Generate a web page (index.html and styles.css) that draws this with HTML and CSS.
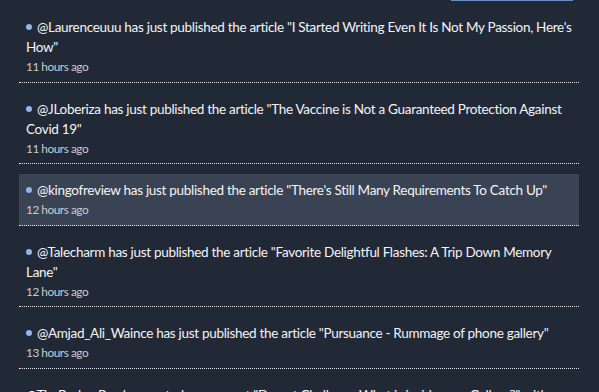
FILE: index.html
```html
<!DOCTYPE html>
<html>
<head>
    <title>Notifications</title>
    <link rel="stylesheet" href="styles.css">
</head>
<body>
    <div class="top-strip"><span class="tab-line"></span></div>
    <ul class="feed">
        <li class="feed-item">
            <p class="feed-text"><span class="dot"></span>@Laurenceuuu has just published the article "I Started Writing Even It Is Not My Passion, Here's How"</p>
            <p class="feed-time">11 hours ago</p>
        </li>
        <li class="feed-item">
            <p class="feed-text"><span class="dot"></span>@JLoberiza has just published the article "The Vaccine is Not a Guaranteed Protection Against Covid 19"</p>
            <p class="feed-time">11 hours ago</p>
        </li>
        <li class="feed-item active">
            <p class="feed-text"><span class="dot"></span>@kingofreview has just published the article "There's Still Many Requirements To Catch Up"</p>
            <p class="feed-time">12 hours ago</p>
        </li>
        <li class="feed-item">
            <p class="feed-text"><span class="dot"></span>@Talecharm has just published the article "Favorite Delightful Flashes: A Trip Down Memory Lane"</p>
            <p class="feed-time">12 hours ago</p>
        </li>
        <li class="feed-item">
            <p class="feed-text"><span class="dot"></span>@Amjad_Ali_Waince has just published the article "Pursuance - Rummage of phone gallery"</p>
            <p class="feed-time">13 hours ago</p>
        </li>
        <li class="feed-item">
            <p class="feed-text">@TheBrokenPen has posted a comment "Do not Challenge What is inside your Gallery?" with</p>
            <p class="feed-time">13 hours ago</p>
        </li>
    </ul>
</body>
</html>
```

FILE: styles.css
```css
html, body {
    margin: 0;
    height: 100%;
    overflow: hidden;
}
body {
    background-color: #212936;
    font-family: Lato, "Open Sans", sans-serif;
    color: #f3f4f6;
}
.top-strip {
    display: flex;
    height: 1px;
    padding-right: 26px;
}
.tab-line {
    margin-left: auto;
    width: 122px;
    background-color: #6c8fc6;
}
.feed {
    list-style: none;
    margin: 0;
    padding: 0 20px 0 19px;
}
.feed-item {
    margin-top: 10px;
    padding: 6px 6px 6.5px 7px;
    border-bottom: 1px dotted #e5e7eb;
}
.feed-item.active {
    background-color: #3a4353;
}
.feed-text {
    margin: 0;
    font-size: 13.5px;
    line-height: 20px;
    letter-spacing: -0.3px;
}
.dot {
    display: inline-block;
    width: 6px;
    height: 6px;
    border-radius: 50%;
    background-color: #93b5ea;
    margin-right: 5px;
    vertical-align: 2px;
}
.feed-time {
    margin: 2px 0 0;
    font-size: 11.8px;
    line-height: 16px;
    color: #c8ccd3;
    letter-spacing: -0.45px;
}
```
